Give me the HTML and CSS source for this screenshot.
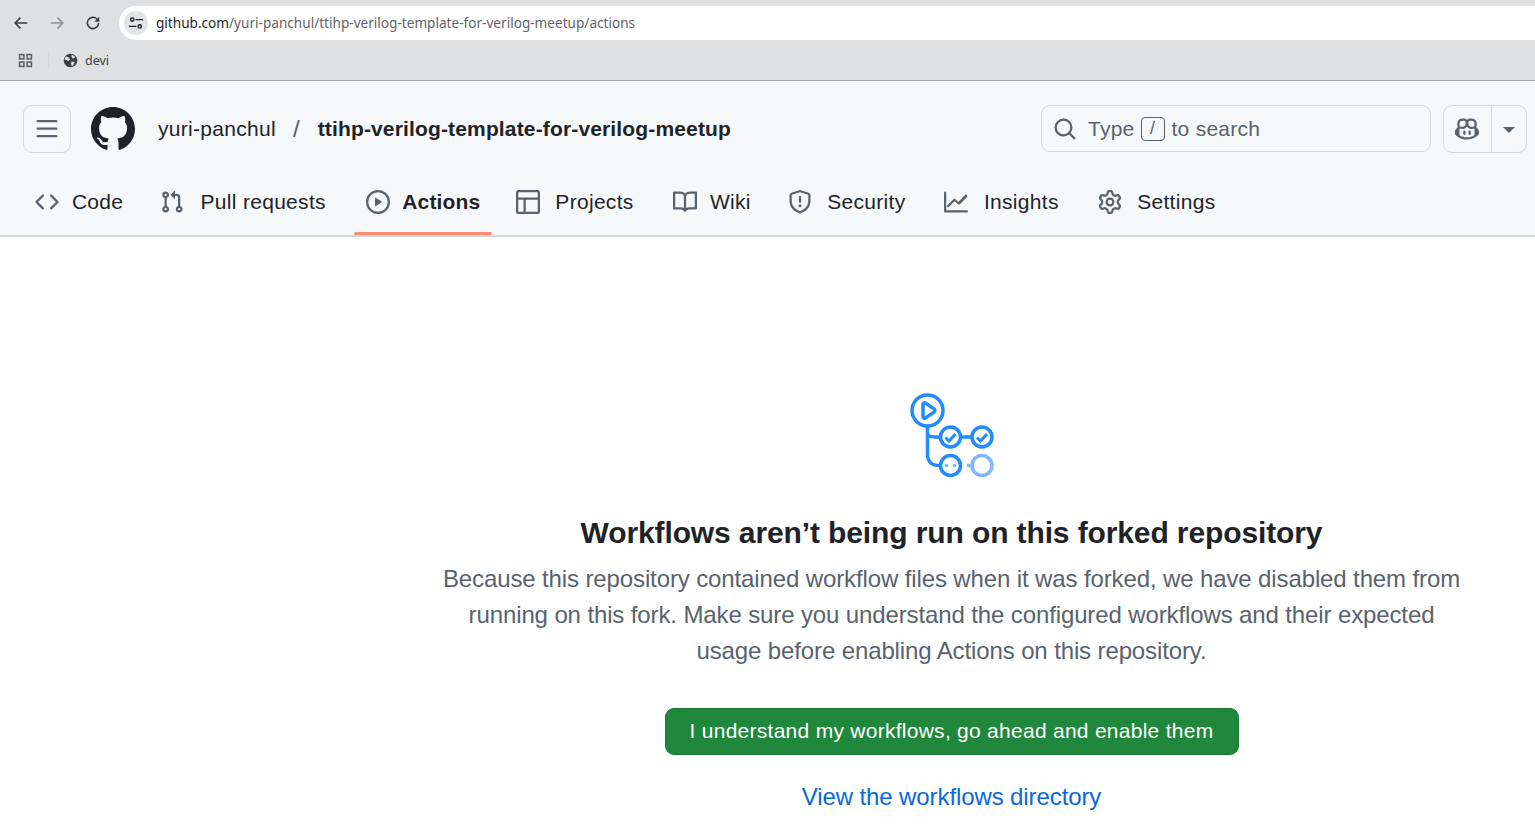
FILE: index.html
```html
<!DOCTYPE html>
<html lang="en">
<head>
  <meta charset="UTF-8">
  <meta name="viewport" content="width=device-width, initial-scale=1.0">
  <title>Actions</title>
  <link rel="stylesheet" href="styles.css">
</head>
<body>
  <div class="browser">
    <div class="toolbar">
      <svg class="tb-icon" viewBox="0 0 16 16"><path d="M13.500 8H3M7.500 3.200 2.800 8l4.700 4.800" fill="none" stroke="#3c4043" stroke-width="1.400"/></svg>
      <svg class="tb-icon" viewBox="0 0 16 16"><path d="M2.500 8H13M8.500 3.200 13.200 8l-4.700 4.800" fill="none" stroke="#8f9194" stroke-width="1.400"/></svg>
      <svg class="tb-icon" viewBox="0 0 16 16"><path d="M13 8a5 5 0 1 1-1.500-3.600L13 6" fill="none" stroke="#3c4043" stroke-width="1.400"/><path d="M13.600 2.400v4.400H9.200z" fill="#3c4043"/></svg>
      <div class="omnibox">
        <span class="site-info">
          <svg viewBox="0 0 16 16" width="16" height="16"><g fill="none" stroke="#202124" stroke-width="1.400"><circle cx="4.200" cy="4.600" r="1.700"/><circle cx="11.800" cy="11.400" r="1.700"/><path d="M7.500 4.600H15M1 11.400h7.500"/></g></svg>
        </span>
        <span class="url"><b>github.com</b>/yuri-panchul/ttihp-verilog-template-for-verilog-meetup/actions</span>
      </div>
    </div>
    <div class="bookmarks">
      <svg class="apps" viewBox="0 0 16 16"><g fill="none" stroke="#5f6368" stroke-width="1.700"><rect x="1.700" y="1.700" width="4.600" height="4.600"/><rect x="9.700" y="1.700" width="4.600" height="4.600"/><rect x="1.700" y="9.700" width="4.600" height="4.600"/><rect x="9.700" y="9.700" width="4.600" height="4.600"/></g></svg>
      <span class="bm-sep"></span>
      <svg class="globe" viewBox="0 0 16 16"><circle cx="8" cy="8" r="7.300" fill="#3c4043"/><path d="M3 3.500 6.500 5 7.500 7 5.500 8.500 3.800 7.500 1.500 7ZM9 2l3 .8 1 2-2.500 1L9.200 4.500ZM9 9l3.500.5L11 13l-1.500 1.200L8.500 11.500Z" fill="#dedfe1"/></svg>
      <span class="bm-label">devi</span>
    </div>
  </div>

  <header class="gh-header">
    <div class="top-row">
      <button class="menu-btn">
        <svg viewBox="0 0 16 16" width="24" height="24"><path d="M1 2.750A.75.75 0 011.750 2h12.500a.75.75 0 010 1.500H1.750A.75.75 0 011 2.750zm0 5A.75.75 0 011.750 7h12.500a.75.75 0 010 1.500H1.750A.75.75 0 011 7.750zM1.750 12h12.500a.75.75 0 010 1.500H1.750a.75.75 0 010-1.500z"/></svg>
      </button>
      <svg class="logo" viewBox="0 0 16 16"><path d="M8 0c4.420 0 8 3.580 8 8a8.013 8.013 0 01-5.450 7.590c-.4.08-.55-.17-.55-.38 0-.27.01-1.130.01-2.200 0-.75-.25-1.230-.54-1.480 1.780-.2 3.650-.88 3.650-3.950 0-.88-.31-1.590-.82-2.150.08-.2.36-1.020-.08-2.120 0 0-.67-.22-2.200.82-.64-.18-1.320-.27-2-.27-.68 0-1.360.09-2 .27-1.530-1.030-2.200-.82-2.200-.82-.44 1.100-.16 1.920-.08 2.120-.51.56-.82 1.280-.82 2.150 0 3.060 1.860 3.750 3.640 3.950-.23.2-.44.55-.51 1.070-.46.21-1.610.55-2.330-.66-.15-.24-.6-.83-1.230-.82-.67.01-.27.38.01.53.34.19.73.9.82 1.130.16.45.68 1.310 2.690.94 0 .67.01 1.300.01 1.490 0 .21-.15.45-.55.38A7.995 7.995 0 010 8c0-4.420 3.580-8 8-8z"/></svg>
      <a class="owner">yuri-panchul</a>
      <span class="slash">/</span>
      <a class="repo">ttihp-verilog-template-for-verilog-meetup</a>
      <div class="search">
        <svg viewBox="0 0 16 16" width="24" height="24"><path d="M10.680 11.740a6 6 0 01-7.922-8.982 6 6 0 018.982 7.922l3.040 3.040a.749.749 0 01-.326 1.275.749.749 0 01-.734-.215zM11.500 7a4.499 4.499 0 10-8.997 0A4.499 4.499 0 0011.500 7z"/></svg>
        <span>Type</span><kbd class="slash-key">/</kbd><span>to search</span>
      </div>
      <div class="copilot">
        <span class="copilot-main">
          <svg viewBox="0 0 16 16" width="24" height="24"><path d="M7.998 15.035c-4.562 0-7.873-2.914-7.998-3.749V9.338c.085-.628.677-1.686 1.588-2.065.013-.07.024-.143.036-.218.029-.183.06-.384.126-.612-.201-.508-.254-1.084-.254-1.656 0-.87.128-1.769.693-2.484.579-.733 1.494-1.124 2.724-1.261 1.206-.134 2.262.034 2.944.765.05.053.096.108.139.165.044-.057.094-.112.143-.165.682-.731 1.738-.899 2.944-.765 1.230.137 2.145.528 2.724 1.261.566.715.693 1.614.693 2.484 0 .572-.053 1.148-.254 1.656.066.228.098.429.126.612.012.076.024.148.037.218.924.385 1.522 1.471 1.591 2.095v1.872c0 .766-3.351 3.795-8.002 3.795Zm0-1.485c2.280 0 4.584-1.110 5.002-1.433V7.862l-.023-.116c-.49.21-1.075.291-1.727.291-1.146 0-2.059-.327-2.710-.991A3.222 3.222 0 0 1 8 6.303a3.240 3.240 0 0 1-.544.743c-.65.664-1.563.991-2.710.991-.652 0-1.236-.081-1.727-.291l-.023.116v4.255c.419.323 2.722 1.433 5.002 1.433ZM6.762 2.830c-.193-.206-.637-.413-1.682-.297-1.019.113-1.479.404-1.713.7-.247.312-.369.789-.369 1.554 0 .793.129 1.171.308 1.371.162.181.519.379 1.442.379.853 0 1.339-.235 1.638-.54.315-.322.527-.827.617-1.553.117-.935-.037-1.395-.241-1.614Zm4.155-.297c-1.044-.116-1.488.091-1.681.297-.204.219-.359.679-.242 1.614.091.726.303 1.231.618 1.553.299.305.784.54 1.638.54.922 0 1.280-.198 1.442-.379.179-.2.308-.578.308-1.371 0-.765-.123-1.242-.37-1.554-.233-.296-.693-.587-1.713-.7Z"/><path d="M6.250 9.037a.75.75 0 0 1 .75.75v1.501a.75.75 0 0 1-1.500 0V9.787a.75.75 0 0 1 .75-.75Zm4.250.75v1.501a.75.75 0 0 1-1.500 0V9.787a.75.75 0 0 1 1.500 0Z"/></svg>
        </span>
        <span class="copilot-caret"></span>
      </div>
    </div>
    <nav class="repo-nav">
      <a class="nav-item">
        <svg viewBox="0 0 16 16"><path d="M11.280 3.220l4.250 4.250a.75.75 0 010 1.060l-4.250 4.250a.749.749 0 01-1.275-.326.749.749 0 01.215-.734L13.940 8l-3.720-3.720a.749.749 0 01.326-1.275.749.749 0 01.734.215zm-6.560 0a.751.751 0 011.042.018.751.751 0 01.018 1.042L2.060 8l3.720 3.720a.749.749 0 01-.326 1.275.749.749 0 01-.734-.215L.47 8.530a.75.75 0 010-1.060z"/></svg>
        <span class="nav-label" data-content="Code">Code</span>
      </a>
      <a class="nav-item">
        <svg viewBox="0 0 16 16"><path d="M1.500 3.250a2.250 2.250 0 113 2.122v5.256a2.251 2.251 0 11-1.500 0V5.372A2.250 2.250 0 011.500 3.250zm5.677-.177L9.573.677A.25.25 0 0110 .854V2.500h1A2.500 2.500 0 0113.500 5v5.628a2.251 2.251 0 11-1.500 0V5a1 1 0 00-1-1h-1v1.646a.25.25 0 01-.427.177L7.177 3.427a.25.25 0 010-.354zM3.750 2.500a.75.75 0 100 1.500.75.75 0 000-1.500zm0 9.500a.75.75 0 100 1.500.75.75 0 000-1.500zm8.250.75a.75.75 0 101.500 0 .75.75 0 00-1.500 0z"/></svg>
        <span class="nav-label" data-content="Pull requests">Pull requests</span>
      </a>
      <a class="nav-item active">
        <svg viewBox="0 0 16 16"><path d="M8 0a8 8 0 110 16A8 8 0 018 0zM1.500 8a6.500 6.500 0 1013 0 6.500 6.500 0 00-13 0zm4.879-2.773l4.264 2.559a.25.25 0 010 .428l-4.264 2.559A.25.25 0 016 10.559V5.442a.25.25 0 01.379-.215z"/></svg>
        <span class="nav-label" data-content="Actions">Actions</span>
      </a>
      <a class="nav-item">
        <svg viewBox="0 0 16 16"><path d="M0 1.750C0 .784.784 0 1.750 0h12.500C15.216 0 16 .784 16 1.750v12.500A1.750 1.750 0 0 1 14.250 16H1.750A1.750 1.750 0 0 1 0 14.250ZM6.500 6.500v8h7.750a.25.25 0 0 0 .25-.25V6.500Zm8-1.500V1.750a.25.25 0 0 0-.25-.25H1.750a.25.25 0 0 0-.25.25V5ZM5 6.500H1.500v7.750c0 .138.112.25.25.25H5Z"/></svg>
        <span class="nav-label" data-content="Projects">Projects</span>
      </a>
      <a class="nav-item">
        <svg viewBox="0 0 16 16"><path d="M0 1.750A.75.75 0 01.75 1h4.253c1.227 0 2.317.59 3 1.501A3.744 3.744 0 0111.006 1h4.245a.75.75 0 01.75.75v10.500a.75.75 0 01-.75.75h-4.507a2.250 2.250 0 00-1.591.659l-.622.621a.75.75 0 01-1.060 0l-.622-.621A2.250 2.250 0 005.258 13H.75a.75.75 0 01-.75-.75zm7.251 10.324l.004-5.073-.002-2.253A2.250 2.250 0 005.003 2.500H1.500v9h3.757a3.750 3.750 0 011.994.574zM8.755 4.750l-.004 7.322a3.752 3.752 0 011.992-.572H14.500v-9h-3.495a2.250 2.250 0 00-2.250 2.250z"/></svg>
        <span class="nav-label" data-content="Wiki">Wiki</span>
      </a>
      <a class="nav-item">
        <svg viewBox="0 0 16 16"><path d="M7.467.133a1.748 1.748 0 011.066 0l5.250 1.680A1.750 1.750 0 0115 3.480V7c0 1.566-.32 3.182-1.303 4.682-.983 1.498-2.585 2.813-5.032 3.855a1.697 1.697 0 01-1.330 0c-2.447-1.042-4.049-2.357-5.032-3.855C1.320 10.182 1 8.566 1 7V3.480a1.750 1.750 0 011.217-1.667zm.61 1.429a.25.25 0 00-.153 0l-5.250 1.680a.25.25 0 00-.174.238V7c0 1.358.275 2.666 1.057 3.860.784 1.194 2.121 2.340 4.366 3.297a.196.196 0 00.154 0c2.245-.956 3.582-2.104 4.366-3.298C13.225 9.666 13.500 8.360 13.500 7V3.480a.251.251 0 00-.174-.237l-5.250-1.680zM8.750 4.750v3a.75.75 0 01-1.500 0v-3a.75.75 0 011.500 0zM9 10.500a1 1 0 11-2 0 1 1 0 012 0z"/></svg>
        <span class="nav-label" data-content="Security">Security</span>
      </a>
      <a class="nav-item">
        <svg viewBox="0 0 16 16"><path d="M1.500 1.750V13.500h13.750a.75.75 0 010 1.500H.75a.75.75 0 01-.75-.75V1.750a.75.75 0 011.500 0zm14.280 2.530l-5.250 5.250a.75.75 0 01-1.060 0L7 7.560l-3.720 3.720a.75.75 0 11-1.060-1.060l4.250-4.250a.75.75 0 011.060 0L9.500 7.940l4.720-4.720a.751.751 0 011.042.018.751.751 0 01.018 1.042z"/></svg>
        <span class="nav-label" data-content="Insights">Insights</span>
      </a>
      <a class="nav-item">
        <svg viewBox="0 0 16 16"><path d="M8 0a8.200 8.200 0 01.701.031C9.444.095 9.990.645 10.160 1.290l.288 1.107c.018.066.079.158.212.224.231.114.454.243.668.386.123.082.233.09.299.071l1.103-.303c.644-.176 1.392.021 1.820.63.27.385.506.792.704 1.218.315.675.111 1.422-.364 1.891l-.814.806c-.049.048-.098.147-.088.294.016.257.016.515 0 .772-.01.147.038.246.088.294l.814.806c.475.469.679 1.216.364 1.891a7.977 7.977 0 01-.704 1.217c-.428.61-1.176.807-1.820.63l-1.102-.302c-.067-.019-.177-.011-.3.071a5.909 5.909 0 01-.668.386c-.133.066-.194.158-.211.224l-.29 1.106c-.168.646-.715 1.196-1.458 1.260a8.006 8.006 0 01-1.402 0c-.743-.064-1.289-.614-1.458-1.260l-.289-1.106c-.018-.066-.079-.158-.212-.224a5.738 5.738 0 01-.668-.386c-.123-.082-.233-.09-.299-.071l-1.103.303c-.644.176-1.392-.021-1.820-.63a8.120 8.120 0 01-.704-1.218c-.315-.675-.111-1.422.363-1.891l.815-.806c.05-.048.098-.147.088-.294a6.214 6.214 0 010-.772c.01-.147-.038-.246-.088-.294l-.815-.806C.635 6.045.431 5.298.746 4.623a7.920 7.920 0 01.704-1.217c.428-.61 1.176-.807 1.820-.63l1.102.302c.067.019.177.011.3-.071.214-.143.437-.272.668-.386.133-.066.194-.158.211-.224l.29-1.106C6.009.645 6.556.095 7.299.03 7.530.01 7.764 0 8 0zm-.571 1.525c-.036.003-.108.036-.137.146l-.289 1.105c-.147.561-.549.967-.998 1.189-.173.086-.34.183-.5.29-.417.278-.97.423-1.529.27l-1.103-.303c-.109-.03-.175.016-.195.045-.22.312-.412.644-.573.99-.014.031-.021.11.059.19l.815.806c.411.406.562.957.53 1.456a4.709 4.709 0 000 .582c.032.499-.119 1.050-.53 1.456l-.815.806c-.081.08-.073.159-.059.19.162.346.353.677.573.989.02.03.085.076.195.046l1.102-.303c.56-.153 1.113-.008 1.530.27.161.107.328.204.501.29.447.222.85.629.997 1.189l.289 1.105c.029.109.101.143.137.146a6.600 6.600 0 001.142 0c.036-.003.108-.036.137-.146l.289-1.105c.147-.561.549-.967.998-1.189.173-.086.34-.183.5-.29.417-.278.97-.423 1.529-.27l1.103.303c.109.029.175-.016.195-.045.22-.313.411-.644.573-.99.014-.031.021-.11-.059-.19l-.815-.806c-.411-.406-.562-.957-.53-1.456a4.709 4.709 0 000-.582c-.032-.499.119-1.050.53-1.456l.815-.806c.081-.08.073-.159.059-.19a6.464 6.464 0 00-.573-.989c-.02-.03-.085-.076-.195-.046l-1.102.303c-.56.153-1.113.008-1.530-.27a4.440 4.440 0 00-.501-.29c-.447-.222-.85-.629-.997-1.189l-.289-1.105c-.029-.11-.101-.143-.137-.146a6.600 6.600 0 00-1.142 0zM11 8a3 3 0 11-6 0 3 3 0 016 0zM9.500 8a1.500 1.500 0 10-3.001.001A1.500 1.500 0 009.500 8z"/></svg>
        <span class="nav-label" data-content="Settings">Settings</span>
      </a>
    </nav>
  </header>

  <main class="page">
    <div class="spacer"></div>
    <section class="blankslate">
      <svg class="workflow-art" viewBox="0 0 88 88" width="88" height="88">
        <g fill="none" stroke="#218bff" stroke-width="3.500">
          <circle cx="19.500" cy="19.500" r="15.500"/>
          <circle cx="42.500" cy="46" r="10"/>
          <circle cx="74" cy="46" r="10"/>
          <circle cx="42.500" cy="74.500" r="10"/>
          <path d="M19.500 35v8c0 2 2 3 12 3M52.500 46H64M19.500 43v20c0 7 3 11.500 13 11.500"/>
          <path d="M15 13.500c0-1.500 1.200-2.200 2.500-1.400l8.500 5.800c1.200.8 1.200 2.400 0 3.200l-8.500 5.800c-1.300.8-2.500.1-2.500-1.400z" stroke-linejoin="round"/>
          <path d="M37.500 46.500l3.500 3.500 6.500-7M69 46.500l3.500 3.500 6.500-7" stroke-width="3"/>
          <path d="M59 74.500h3.500" stroke="#80b9ff"/>
          <circle cx="74" cy="74.500" r="10" stroke="#80b9ff"/>
        </g>
        <circle cx="38.500" cy="74.500" r="1.800" fill="#80b9ff"/>
        <circle cx="46.500" cy="74.500" r="1.800" fill="#80b9ff"/>
      </svg>
      <h2 class="blank-title">Workflows aren’t being run on this forked repository</h2>
      <p class="blank-text">Because this repository contained workflow files when it was forked, we have disabled them from running on this fork. Make sure you understand the configured workflows and their expected usage before enabling Actions on this repository.</p>
      <button class="enable-btn">I understand my workflows, go ahead and enable them</button>
      <a class="dir-link">View the workflows directory</a>
    </section>
  </main>
</body>
</html>
```

FILE: styles.css
```css
html, body {
  height: 100%;
}

body {
  margin: 0;
  overflow: hidden;
  font-family: "Liberation Sans", Arial, sans-serif;
  background-color: #fff;
  color: #1f2328;
}

/* browser chrome */
.browser {
  background-color: #dfe0e2;
  border-bottom: 1px solid #a9abae;
  height: 81px;
  box-sizing: border-box;
  padding-top: 6px;
}

.toolbar {
  display: flex;
  align-items: center;
  height: 34px;
  padding-left: 12px;
}

.tb-icon {
  width: 18px;
  height: 18px;
  margin-right: 18px;
}

.omnibox {
  display: flex;
  align-items: center;
  flex: 1;
  height: 34px;
  margin-left: -1px;
  background-color: #fff;
  border-radius: 17px 0 0 17px;
  padding-left: 5px;
}

.site-info {
  display: flex;
  align-items: center;
  justify-content: center;
  width: 24px;
  height: 24px;
  border-radius: 50%;
  background-color: #e3e4e6;
}

.url {
  margin-left: 8px;
  margin-bottom: 2px;
  font-family: "Noto Sans", sans-serif;
  font-size: 13.600px;
  color: #5f6368;
}

.url b {
  font-weight: 400;
  color: #1f1f1f;
}

.bookmarks {
  display: flex;
  align-items: center;
  height: 40px;
  padding-left: 18px;
}

.apps {
  width: 15px;
  height: 15px;
}

.bm-sep {
  width: 1px;
  height: 18px;
  margin: 0 14px 0 15px;
  background-color: #d6d7d9;
}

.globe {
  width: 15px;
  height: 15px;
}

.bm-label {
  margin-left: 7px;
  font-family: "Noto Sans", sans-serif;
  font-size: 12.500px;
  color: #3c4043;
}

/* github header */
.gh-header {
  background-color: #f6f8fa;
  border-bottom: 2px solid #d1d9e0;
  height: 156px;
  box-sizing: border-box;
}

.top-row {
  display: flex;
  align-items: center;
  height: 96px;
  padding: 0 8px 0 23px;
}

.menu-btn {
  display: flex;
  align-items: center;
  justify-content: center;
  width: 48px;
  height: 48px;
  padding: 0;
  background-color: transparent;
  border: 1px solid #d1d9e0;
  border-radius: 9px;
  fill: #59636e;
}

.logo {
  width: 44px;
  height: 44px;
  margin-left: 20px;
  fill: #1f2328;
}

.owner {
  margin-left: 23px;
  font-size: 21px;
  letter-spacing: 0.3px;
  color: #1f2328;
}

.slash {
  margin: 0 18px 0 17px;
  font-size: 24px;
  color: #59636e;
}

.repo {
  font-size: 21px;
  font-weight: 700;
  letter-spacing: 0.15px;
  color: #1f2328;
}

.search {
  display: flex;
  align-items: center;
  width: 390px;
  height: 47px;
  box-sizing: border-box;
  margin-left: auto;
  margin-top: -1px;
  padding-left: 11px;
  border: 1px solid #d1d9e0;
  border-radius: 9px;
  font-size: 21px;
  letter-spacing: 0.25px;
  color: #59636e;
  fill: #59636e;
}

.search span:first-of-type {
  margin-left: 11px;
}

.slash-key {
  display: flex;
  align-items: center;
  justify-content: center;
  width: 24px;
  height: 24px;
  box-sizing: border-box;
  margin: 0 7px 0 6px;
  border: 1px solid #59636e;
  border-radius: 4px;
  font-family: "Liberation Sans", sans-serif;
  font-size: 18px;
}

.copilot {
  display: flex;
  width: 84px;
  height: 48px;
  box-sizing: border-box;
  margin-left: 12px;
  border: 1px solid #d1d9e0;
  border-radius: 9px;
}

.copilot-main {
  display: flex;
  align-items: center;
  justify-content: center;
  width: 45px;
  padding-right: 2px;
  border-right: 1px solid #d1d9e0;
  fill: #59636e;
}

.copilot-caret {
  width: 0;
  height: 0;
  margin: 21px 0 0 11px;
  border-left: 6px solid transparent;
  border-right: 6px solid transparent;
  border-top: 6px solid #59636e;
}

.repo-nav {
  display: flex;
  height: 58px;
  padding-left: 23px;
}

.nav-item {
  position: relative;
  display: flex;
  align-items: center;
  gap: 12px;
  height: 48px;
  margin-top: 1px;
  margin-right: 12px;
  padding: 0 12px;
  font-size: 21px;
  letter-spacing: 0.3px;
  color: #1f2328;
}

.nav-item svg {
  width: 24px;
  height: 24px;
  fill: #59636e;
}

/* bold copy keeps the label as wide as when it is selected */
.nav-label {
  display: inline-grid;
  justify-items: center;
}

.nav-label::before {
  content: attr(data-content);
  height: 0;
  font-weight: 700;
  letter-spacing: 0.165px;
  visibility: hidden;
}

.nav-item.active {
  font-weight: 700;
  letter-spacing: 0.165px;
}

.nav-item.active::after {
  content: "";
  position: absolute;
  left: 0;
  right: 0;
  bottom: -9px;
  height: 3px;
  border-radius: 2px;
  background-color: #fd8c73;
}

/* blank slate */
.page {
  display: flex;
}

.spacer {
  width: 368px;
  flex-shrink: 0;
}

.blankslate {
  flex: 1;
  display: flex;
  flex-direction: column;
  align-items: center;
  padding-top: 154px;
  text-align: center;
}

.workflow-art {
  display: block;
  margin-left: 1px;
}

.blank-title {
  margin: 31px 0 0;
  font-size: 30px;
  line-height: 45px;
  font-weight: 700;
  letter-spacing: -0.115px;
  color: #1f2328;
}

.blank-text {
  width: 1028px;
  margin: 6px 0 0;
  font-size: 24px;
  line-height: 36px;
  letter-spacing: -0.12px;
  color: #59636e;
}

.enable-btn {
  width: 574px;
  height: 47px;
  margin-top: 39px;
  padding: 0 0 2px;
  background-color: #1f883d;
  border: 1px solid #1b7735;
  border-radius: 9px;
  font-family: "Liberation Sans", sans-serif;
  font-size: 21px;
  letter-spacing: 0.27px;
  color: #fff;
}

.dir-link {
  margin-top: 24px;
  font-size: 24px;
  line-height: 36px;
  letter-spacing: -0.1px;
  color: #0969da;
}
```
